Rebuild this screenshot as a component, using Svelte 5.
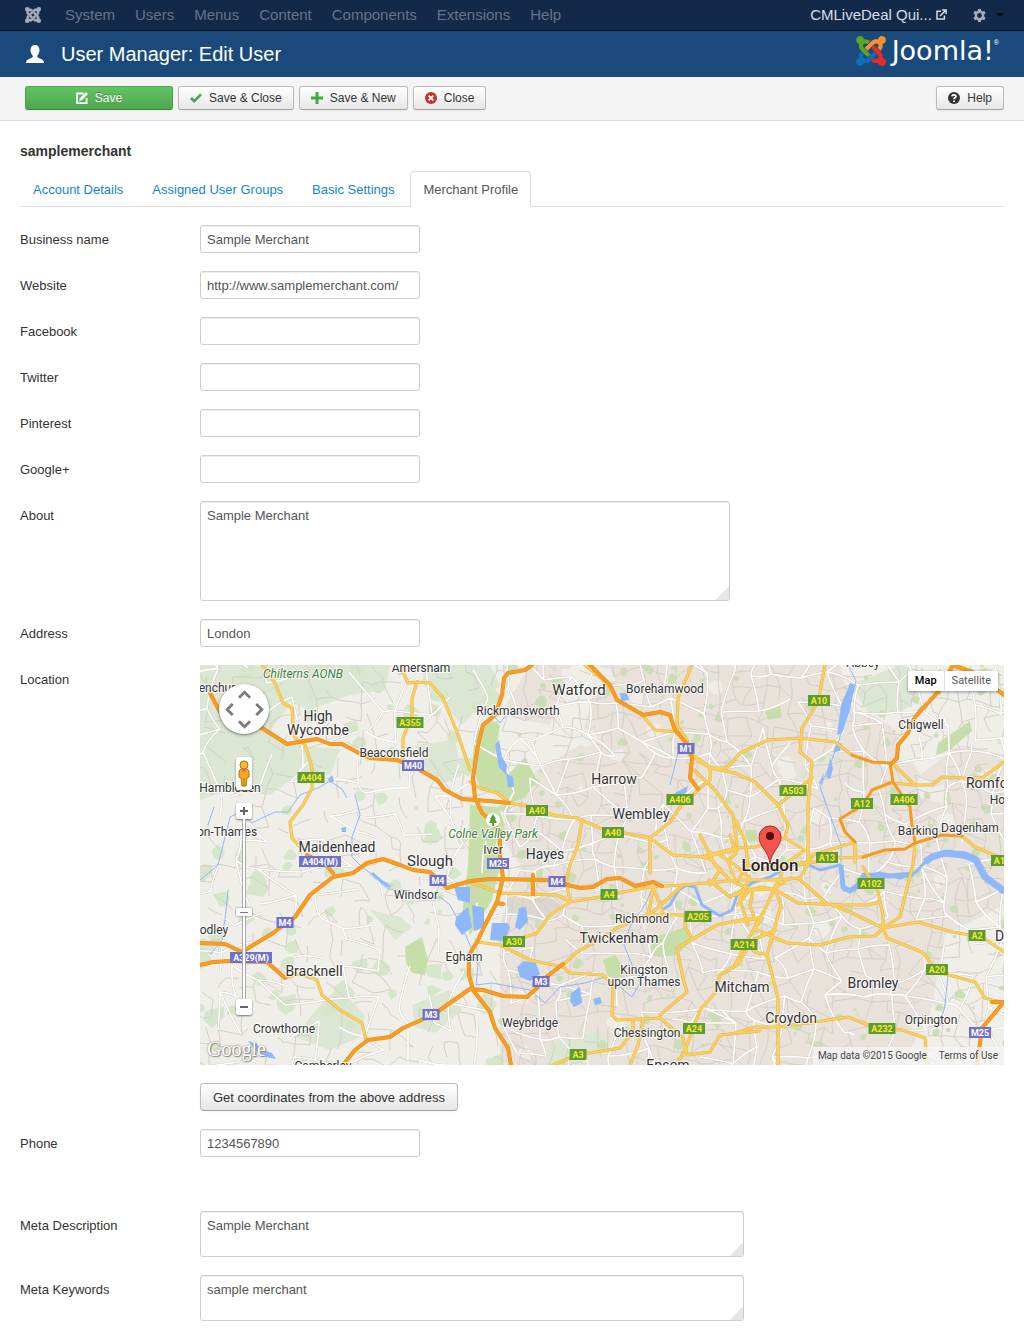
<script>
  const menu = ['System', 'Users', 'Menus', 'Content', 'Components', 'Extensions', 'Help'];
  const tabs = ['Account Details', 'Assigned User Groups', 'Basic Settings', 'Merchant Profile'];
  let active = $state('Merchant Profile');
  let mapType = $state('Map');
  let zoomLevel = $state(48);

  const textFields = [
    { id: 'business', label: 'Business name', value: 'Sample Merchant' },
    { id: 'website', label: 'Website', value: 'http://www.samplemerchant.com/' },
    { id: 'facebook', label: 'Facebook', value: '' },
    { id: 'twitter', label: 'Twitter', value: '' },
    { id: 'pinterest', label: 'Pinterest', value: '' },
    { id: 'google', label: 'Google+', value: '' }
  ];

  // Four interlocking arms of the Joomla mark
  const arms = [
    { c: '#5aa426', d: 'M.6 92.1C.6 58.8 27.4 32 60.4 32c30 0 54.5 21.9 59.2 50.2 32.6-7.6 67.1.6 96.5 30l-44.3 44.3c-20.5-20.5-42.6-16.3-55.4-3.5-14.3 14.3-14.3 37.9 0 52.2l99.5 99.5-44 44.3c-87.7-87.2-49.7-49.7-99.8-99.7-26.8-26.5-35-64.8-24.8-98.9C20.4 144.6.6 120.7.6 92.1z' },
    { c: '#fa8f2b', d: 'M130.1 208.5l44.3 44.3c10-10 89.7-89.7 99.7-99.8 14.3-14.3 37.6-14.3 51.9 0 12.8 12.8 17 35-3.5 55.4l44 44.3c31.2-31.2 38.5-67.6 28.9-101.2 29.2-4.1 51.9-29.2 51.9-59.5 0-33.2-26.8-60.1-59.8-60.1-30.3 0-55.4 22.5-59.5 51.6-33.8-9.9-71.7-1.5-98.3 25.1-18.3 19.1-71.1 71.5-99.6 99.9z' },
    { c: '#ea2a27', d: 'M396.4 360.7c8.2-32.7-.9-68.5-26.3-93.9-11.8-12.2 5 4.7-99.5-99.7l-44.3 44.3 99.7 99.7c14.3 14.3 14.3 37.6 0 51.9-12.8 12.8-35 17-55.4-3.5l-44 44.3c27.6 30.2 68 38.8 102.7 28 5.5 27.4 29.7 48.1 58.9 48.1 33 0 59.8-26.8 59.8-60.1 0-30.2-22.5-55-51.6-59.1z' },
    { c: '#0e6fb5', d: 'M312.1 307.6l-44-44.3c-87 86.4-50.4 50.4-99.7 99.8-14.3 14.3-37.6 14.3-51.9 0-13.1-13.4-16.9-35.3 3.2-55.4l-44-44.3c-30.2 30.2-38 65.2-29.5 98.3-26.7 6-46.2 29.9-46.2 58.2C0 453.2 26.8 480 59.8 480c28.6 0 52.5-19.8 58.6-46.7 32.7 8.2 68.5-.6 94.2-26 32.1-32 12.2-12.4 99.5-99.7z' }
  ];

  // Seeded generator, so that the street pattern is the same on every load
  let seed = 7;
  const rnd = () => {
    seed = (seed * 16807) % 2147483647;
    return seed / 2147483647;
  };

  function network(step, keep, jitter, rural) {
    const cols = Math.ceil(804 / step) + 2;
    const rows = Math.ceil(400 / step) + 2;
    const pts = [];
    for (let r = 0; r < rows; r++) {
      pts.push([]);
      for (let c = 0; c < cols; c++) {
        pts[r].push([
          Math.round((c - 0.5) * step + (rnd() - 0.5) * step * jitter),
          Math.round((r - 0.5) * step + (rnd() - 0.5) * step * jitter)
        ]);
      }
    }
    let d = '';
    const link = (a, b) => {
      const k = a[0] < 300 ? keep * rural : keep;
      if (rnd() > k) return;
      const mx = Math.round((a[0] + b[0]) / 2 + (rnd() - 0.5) * step * 0.3);
      const my = Math.round((a[1] + b[1]) / 2 + (rnd() - 0.5) * step * 0.3);
      d += `M${a[0]} ${a[1]}Q${mx} ${my} ${b[0]} ${b[1]}`;
    };
    for (let r = 0; r < rows - 1; r++) {
      for (let c = 0; c < cols - 1; c++) {
        link(pts[r][c], pts[r][c + 1]);
        link(pts[r][c], pts[r + 1][c]);
        if (rnd() < 0.15) link(pts[r][c], pts[r + 1][c + 1]);
      }
    }
    return d;
  }

  function patches(count, x0, x1, size) {
    let d = '';
    for (let i = 0; i < count; i++) {
      const x = x0 + rnd() * (x1 - x0);
      const y = rnd() * 400;
      const s = size * (0.3 + rnd());
      const n = 7;
      for (let k = 0; k < n; k++) {
        const a = (k / n) * Math.PI * 2;
        const q = s * (0.55 + rnd() * 0.6);
        d += `${k ? 'L' : 'M'}${Math.round(x + Math.cos(a) * q)} ${Math.round(y + Math.sin(a) * q)}`;
      }
      d += 'Z';
    }
    return d;
  }

  const lanes = network(15, 0.6, 0.8, 0.5);
  const streets = network(27, 0.75, 0.8, 0.42);
  const woods = patches(95, 0, 300, 9);
  const parks = patches(220, 290, 804, 5);
  const fields = patches(35, 290, 804, 10);

  const ruralAreas = [
    '0,0 330,0 300,50 350,60 372,0 400,0 380,80 330,110 300,170 320,200 300,260 300,400 0,400',
    '640,0 804,0 804,90 760,80 720,110 690,60 650,40',
    '745,270 804,240 804,400 700,400 730,350'
  ];
  const greenAreas = [
    '0,0 70,0 90,40 70,66 90,80 140,84 130,110 95,112 70,130 30,125 0,135',
    '70,0 190,0 185,25 150,30 110,45 85,35',
    '225,0 290,0 300,20 262,60 245,40 222,18',
    '130,330 145,318 150,335 165,350 160,372 130,385 95,372 110,352',
    '215,80 255,75 262,110 240,120 225,105',
    '170,245 200,252 212,262 195,275 185,262',
    '212,340 250,325 262,345 235,368 215,362',
    '650,20 700,0 735,10 705,45 670,50',
    '350,380 400,365 410,385 370,400 345,400'
  ];
  const brightParks = [
    '275,70 290,55 300,60 295,90 310,108 325,92 337,115 325,132 308,140 298,126 280,122 272,100',
    '270,140 298,142 305,160 295,180 300,200 292,235 280,255 270,270 262,250 268,200',
    '455,272 485,262 492,275 477,290 462,292 448,290',
    '403,295 415,290 425,305 422,318 408,312',
    '205,282 222,272 228,295 225,310 212,308 206,298',
    '738,78 770,56 772,66 750,85 736,90',
    '545,165 556,165 558,176 546,178',
    '565,47 580,40 582,52 568,55'
  ];
  const lakes = [
    '315,262 319,243 326,242 328,256 320,265', '292,258 307,258 310,262 305,276 290,275',
    '317,302 324,296 336,298 340,309 330,316 320,312', '371,328 380,322 382,338 374,342 370,336',
    '393,334 400,332 402,338 395,340', '650,18 655,20 650,45 642,68 637,70 641,40',
    '420,28 427,28 429,35 421,36', '295,80 299,75 302,92 307,100 306,110 299,102',
    '306,108 313,112 314,122 308,122', '254,222 270,222 270,238 258,235',
    '256,252 268,242 272,262 262,270 255,260', '272,240 284,243 284,262 274,266',
    '628,105 630,92 633,104 630,114 626,112', '619,118 624,108 622,120', '636,80 642,78 640,86 633,87',
    '475,128 488,121 486,128 478,132', '128,114 132,110 134,116 130,118', '141,163 146,162 146,167 142,167',
    '48,376 56,378 60,384 72,388 76,394 66,392 56,386'
  ];
  const rivers = [
    ['0,215 18,200 30,152 38,148 52,158 60,154 75,147 88,147 100,130 118,123 130,116 142,124 147,133', 1],
    ['8,160 14,142 M28,225 26,246 22,275 10,290', 1],
    ['155,130 160,150 152,172 152,192 160,200 172,210 188,224 210,226 228,234 240,232 250,240 262,262 270,280 278,300 276,320 292,318 330,325 345,338 360,322 385,318 405,312 420,322 432,332 440,318 432,300 424,280 430,262 446,238 452,224', 1],
    ['172,208 182,217 190,222', 3],
    ['462,245 470,240 478,226 486,220 495,222 502,240 520,251 532,245 538,228 552,218 570,212 592,200 605,198 620,205 640,200 644,225 655,225 662,212 680,208 700,213 715,208 725,197 740,190 758,191 775,195 785,212 804,228', 3],
    ['725,197 732,192 745,188 765,190 776,195 785,212 804,226', 7],
    ['641,200 643,222 650,226 658,220 664,210 690,211 714,209', 5],
    ['648,0 656,16 648,45 639,75 630,100 620,122 630,150 641,180 641,200', 1],
    ['748,310 745,340 740,360 M480,80 470,120 M293,50 300,58 310,45', 1]
  ];
  const yellow = [
    '62,0 75,18 83,38 92,43 93,60 95,73 105,80 112,103 112,123 103,140 90,157 92,173 100,182',
    '200,0 208,18 217,17 212,33 212,50 203,73 203,95', '217,17 230,18 243,33 257,67 270,105',
    '270,117 280,123 297,128 310,138 337,143 353,150 377,153 400,163 450,173 473,190 503,192 537,185',
    '385,0 403,15 415,30', '442,50 455,65 477,67 487,75 490,90 510,103', '492,0 478,33 477,60 487,75',
    '493,90 510,102 510,115 500,123 480,142 470,157 450,173 450,208',
    '510,103 527,103 540,88 568,75 600,73 635,77 652,90', '494,105 515,125 533,150 537,180',
    '382,155 378,180 370,200 366,215 370,237',
    '625,0 618,37 602,63 600,87 612,97 608,140 608,200', '535,108 555,117 578,140 588,160 585,173 608,187',
    '510,103 535,108', '578,140 612,113', '692,98 715,120 732,120 742,112 765,113 782,113 804,97',
    '690,118 715,120', '762,171 775,182 804,194', '502,192 535,183 555,182 585,173',
    '612,190 655,177 655,197', '600,200 635,193 663,192', '715,180 713,200 709,215 700,252 683,263',
    '270,217 300,228 357,230 370,237 400,232 423,227 450,222 483,220 540,215 575,215 600,213 612,192',
    '370,237 350,250 337,268 325,272', '277,277 300,280 330,295 363,302 370,308 403,310 413,320 412,350 417,355 460,353 483,373',
    '363,300 377,287 403,272 417,263 453,247 483,220', '353,400 377,390 420,383 433,367 433,355', '430,400 438,380 443,355',
    '460,350 487,327 483,313 477,283 517,260 540,255 560,253', '453,223 450,240 448,250 485,250 485,262 492,273', '453,223 463,247',
    '483,373 487,390 510,387 520,370 560,366', '477,400 487,380 500,345 515,328 520,310 537,300 553,275 575,265',
    '535,368 555,362 578,362 615,357 648,352 668,360 702,365 725,373 727,400',
    '580,243 567,290 578,333 578,400', '574,224 598,238 640,240 668,240 680,237', '598,213 625,237 652,248 683,263',
    '535,257 562,253 555,264 587,278 620,280 648,272 675,271 683,263 718,257 752,267 782,272 804,287',
    '683,263 687,273 722,287 738,307 775,317 785,333 804,338', '663,202 678,227 683,250 683,263',
    '537,240 550,225 574,224 590,213', '535,230 560,222 575,224 582,243', '540,212 548,200 563,205 580,200 608,197',
    '535,155 545,175 548,200', '520,190 535,200 549,212 540,235 548,260', '574,224 567,240 545,280 535,300',
    '574,224 580,213 584,200 602,187', '510,220 520,205 512,195 503,192', '509,215 530,232 548,222',
    '500,170 515,200 530,215 545,222', '530,170 536,188 528,196 535,215', '555,255 550,240 553,225',
    '85,313 100,309 117,315 122,330 140,345 162,358 166,375', '567,290 555,287 545,278'
  ];
  const motorway = [
    '10,28 20,47 40,54 62,63 87,79 117,74 130,79 142,79 157,87 170,93 197,95 220,105 237,115 245,125 262,134 290,136 309,138',
    '332,0 325,5 308,8 304,13 302,30 295,50 283,60 278,80 273,113 275,133 282,148 290,155 300,167 300,190 303,213 297,237 285,260 277,277 269,290 269,310 273,325 290,347 295,363 308,383 311,400',
    '143,400 155,385 168,375 190,372 203,363 233,350 247,340 270,324 283,325 303,331 327,332 337,323 345,313 363,299',
    '0,300 13,297 30,296 67,297 85,313', '0,278 25,279 42,287 73,268 95,252 110,230 133,212 153,208 167,198 183,194 200,200 213,205 230,207 247,223 270,216 290,214 347,215 380,223 393,222 407,214 420,213 435,221 453,217 462,221',
    '107,190 126,200 133,208', '333,210 333,229', '296,238 303,239',
    '390,0 410,20 417,35 443,50 460,47 470,50 475,65 488,80 492,93 490,113 498,124',
    '753,0 738,27 715,52 708,68 698,80 697,93 692,98', '753,0 775,8 804,30', '804,337 782,363 777,400', '792,337 804,337'
  ];
  const trunk = [
    '652,90 672,97 690,98 693,117 710,142 712,160 715,177', '690,118 672,125 663,140 640,154 645,167 655,177',
    '663,192 685,185 705,184 715,178 742,170 762,171'
  ];
  const pathOf = (s) => s.split(' M').map((p) => 'M' + p.replace('M', '').replace(/ /g, 'L').replace(/,/g, ' ')).join('');

  const places = [
    ['Amersham', 221, 7, 12], ['enchur', 17, 27, 12], ['High', 118, 56, 14], ['Wycombe', 118, 70, 14],
    ['Watford', 379, 30, 15], ['Borehamwood', 465, 28, 12], ['Rickmansworth', 318, 50, 12], ['Beaconsfield', 194, 92, 12],
    ['Hambleden', 30, 127, 12], ['Harrow', 414, 119, 14], ['Wembley', 441, 154, 14], ['on-Thames', 27, 171, 12],
    ['Maidenhead', 137, 187, 14], ['Slough', 230, 201, 15], ['Iver', 293, 189, 12], ['Hayes', 345, 194, 14],
    ['Windsor', 216, 234, 12], ['Richmond', 442, 258, 12], ['Twickenham', 419, 278, 14], ['Chigwell', 721, 64, 12],
    ['Romford', 793, 123, 14], ['Hornchurch', 821, 139, 12], ['Barking', 718, 170, 12], ['Dagenham', 770, 167, 12],
    ['Egham', 264, 296, 12], ['Bracknell', 114, 311, 14], ['odley', 14, 269, 12], ['Crowthorne', 84, 368, 12],
    ['Kingston', 444, 309, 12], ['upon Thames', 444, 321, 12], ['Weybridge', 330, 362, 12], ['Chessington', 447, 372, 12],
    ['Mitcham', 542, 327, 14], ['Bromley', 673, 323, 14], ['Croydon', 591, 358, 14], ['Orpington', 731, 359, 12],
    ['Camberley', 123, 405, 12], ['Epsom', 468, 405, 14], ['Dartford', 821, 276, 14], ['Abbey', 663, 2, 12]
  ];
  const shields = [
    ['A355', 210, 57], ['A404', 111, 112], ['A40', 337, 145], ['A40', 413, 167], ['A406', 480, 134], ['M40', 213, 100],
    ['M1', 486, 83], ['A10', 619, 35], ['A503', 593, 125], ['A12', 662, 138], ['A406', 704, 134], ['A13', 627, 192],
    ['A102', 671, 218], ['A13', 802, 195], ['A404(M)', 120, 196], ['M4', 238, 215], ['M25', 298, 198], ['M4', 357, 216],
    ['A4', 409, 229], ['A205', 498, 251], ['A214', 544, 279], ['A2', 777, 270], ['A20', 737, 304], ['M25', 780, 367],
    ['A232', 682, 363], ['A24', 494, 363], ['A3', 378, 389], ['M3', 341, 316], ['A30', 314, 276], ['M3', 231, 349],
    ['M4', 85, 257], ['A329(M)', 51, 292]
  ].map(([t, x, y]) => ({ t, x, y, w: t.length * 5 + 7, blue: t.includes('M') }));
</script>

<nav class="topbar" aria-label="Main menu">
  <a class="mark" href="#home" aria-label="Home">
    <svg viewBox="0 32 448 448" width="16" height="16">{#each arms as a}<path d={a.d} fill="#a3acb8" stroke="#a3acb8" stroke-width="14" />{/each}</svg>
  </a>
  <ul>
    {#each menu as m}<li><a href="#{m}">{m}</a></li>{/each}
  </ul>
  <a class="site" href="#site">CMLiveDeal Qui...
    <svg width="11" height="11" viewBox="0 0 11 11" fill="none" stroke="#d8dde3" stroke-width="1.5"><path d="M5 2.2H1V10h7.4V6.4M4 7l5-5M6 .9h4.1V5" /></svg>
  </a>
  <button class="gear" aria-label="Settings">
    <svg width="13" height="13" viewBox="0 0 16 16"><path fill="#a3acb8" fill-rule="evenodd" d="M6.3 0h3.4l.5 2.200 1.400.8 2.200-.7 1.700 2.900-1.700 1.500v2.600l1.700 1.500-1.700 2.900-2.200-.7-1.400.8L9.700 16H6.300l-.5-2.200-1.400-.8-2.200.7L.5 10.800l1.700-1.500V6.700L.5 5.200l1.700-2.900 2.200.7 1.400-.8zM8 5a3 3 0 100 6 3 3 0 000-6z" /></svg>
    <span class="caret"></span>
  </button>
</nav>

<header>
  <svg width="20" height="19" viewBox="0 0 20 19"><path fill="#fff" d="M10 0c3 0 4.500 2 4.500 5 0 2.600-1 4.400-2 5.400-.6.8-.3 1.800.5 2.200l4 1.800c1.400.7 1.900 1.800 2 3.600H1c.1-1.800.6-2.900 2-3.600l4-1.800c.8-.4 1.100-1.400.5-2.200-1-1-2-2.800-2-5.400 0-3 1.500-5 4.500-5z" /></svg>
  <h1>User Manager: Edit User</h1>
  <div class="brand">
    <svg viewBox="0 32 448 448" width="30" height="30">{#each arms as a}<path d={a.d} fill={a.c} />{/each}</svg>
    <span>Joomla!</span><sup>®</sup>
  </div>
</header>

<div class="toolbar" role="toolbar">
  <button class="btn save">
    <svg width="12" height="12" viewBox="0 0 12 12"><path fill="none" stroke="#fff" stroke-width="1.800" d="M7.500 1.500H1v9.600h9.600V6" /><path fill="#fff" d="M3.200 9l.6-2.800L10 0l2 2-6.100 6.300z" /></svg>Save
  </button>
  <button class="btn"><svg width="12" height="12" viewBox="0 0 12 12"><path fill="none" stroke="#46a546" stroke-width="2.600" d="M1 6l3.200 3.200L11 2.400" /></svg>Save &amp; Close</button>
  <button class="btn"><svg width="12" height="12" viewBox="0 0 12 12"><path stroke="#46a546" stroke-width="3" d="M6 0v12M0 6h12" /></svg>Save &amp; New</button>
  <button class="btn"><svg width="12" height="12" viewBox="0 0 12 12"><circle cx="6" cy="6" r="6" fill="#bd362f" /><path stroke="#fff" stroke-width="1.800" d="M3.700 3.700l4.600 4.600M8.300 3.700L3.700 8.300" /></svg>Close</button>
  <button class="btn help"><svg width="12" height="12" viewBox="0 0 12 12"><circle cx="6" cy="6" r="6" fill="#333" /><path fill="none" stroke="#fff" stroke-width="1.700" d="M3.900 4.400c.2-2 4.300-1.900 4.100.1C7.900 5.700 6 5.500 6 7.300M6 8.400v1.500" /></svg>Help</button>
</div>

<main>
  <h2>samplemerchant</h2>
  <div class="tabs" role="tablist">
    {#each tabs as t}
      <button role="tab" aria-selected={active === t} class:active={active === t} onclick={() => (active = t)}>{t}</button>
    {/each}
  </div>

  <form>
    {#each textFields as f}
      <div class="row">
        <label for={f.id}>{f.label}</label>
        <input id={f.id} type="text" value={f.value} />
      </div>
    {/each}
    <div class="row">
      <label for="about">About</label>
      <textarea id="about" class="about">Sample Merchant</textarea>
    </div>
    <div class="row">
      <label for="address">Address</label>
      <input id="address" type="text" value="London" />
    </div>
    <div class="row">
      <span class="label">Location</span>
      <div class="location">
        <div class="map">
          <svg class="canvas" viewBox="0 0 804 400" preserveAspectRatio="xMidYMid slice" role="img" aria-label="Map of London">
            <rect width="804" height="400" fill="#e8e2db" />
            {#each ruralAreas as p}<polygon points={p} fill="#f0eee8" />{/each}
            {#each greenAreas as p}<polygon points={p} fill="#dbe7d2" />{/each}
            <path d={woods} fill="#d5e6ca" />
            <path d={fields} fill="#efede7" />
            <path d={parks} fill="#cadfb5" />
            {#each brightParks as p}<polygon points={p} fill="#c5dfa6" />{/each}
            <polygon points="306,233 350,233 363,241 340,258 308,248" fill="#dcd6d1" />
            <path d={lanes} fill="none" stroke="#d6cfc6" stroke-width="1" />
            <path d={streets} fill="none" stroke="#d3cbc2" stroke-width="2.400" />
            <path d={streets} fill="none" stroke="#fff" stroke-width="1.600" />
            {#each lakes as p}<polygon points={p} fill="#8fb8fb" />{/each}
            {#each rivers as [r, w]}<path d={pathOf(r)} fill="none" stroke="#8fb8fb" stroke-width={w} stroke-linejoin="round" />{/each}
            {#each yellow as r}<path d={pathOf(r)} class="road" stroke="#e3b553" stroke-width="3.200" />{/each}
            {#each yellow as r}<path d={pathOf(r)} class="road" stroke="#fbcf58" stroke-width="2.200" />{/each}
            {#each trunk as r}<path d={pathOf(r)} class="road" stroke="#f5991f" stroke-width="3" />{/each}
            {#each motorway as r}<path d={pathOf(r)} class="road" stroke="#e58a1c" stroke-width="4" />{/each}
            {#each motorway as r}<path d={pathOf(r)} class="road" stroke="#f99d20" stroke-width="3" />{/each}
            <circle cx="293" cy="155" r="7" fill="#fff" />
            <path d="M293 149l3 5h-1l2 4h-3v3h-2v-3h-3l2-4h-1z" fill="#5b9b3a" />
            {#each shields as s}
              <rect x={s.x - s.w / 2} y={s.y - 5} width={s.w} height="11" fill={s.blue ? '#6f6fce' : '#5c9c32'} />
              <text class="shield" x={s.x} y={s.y + 4} fill={s.blue ? '#fff' : '#f7e733'}>{s.t}</text>
            {/each}
            <text class="place park" x="103" y="13" font-size="12">Chilterns AONB</text>
            <text class="place park" x="293" y="173" font-size="12">Colne Valley Park</text>
            {#each places as [t, x, y, s]}<text class="place" {x} {y} font-size={s}>{t}</text>{/each}
            <text class="place city" x="570" y="206" font-size="17">London</text>
            <path d="M570 199c-1-13-11-17-11-27a11 11 0 0122 0c0 10-10 14-11 27z" fill="#f3544c" stroke="#a52f2a" stroke-width="1" />
            <circle cx="570" cy="171" r="4" fill="#5a0d0a" />
          </svg>

          <div class="pan">
            <button type="button" class="up" aria-label="Pan up"><svg viewBox="0 0 14 9"><path d="M1 8l6-6 6 6" /></svg></button>
            <button type="button" class="left" aria-label="Pan left"><svg viewBox="0 0 9 14"><path d="M8 1L2 7l6 6" /></svg></button>
            <button type="button" class="right" aria-label="Pan right"><svg viewBox="0 0 9 14"><path d="M1 1l6 6-6 6" /></svg></button>
            <button type="button" class="down" aria-label="Pan down"><svg viewBox="0 0 14 9"><path d="M1 1l6 6 6-6" /></svg></button>
          </div>
          <div class="zoomer">
            <button type="button" class="pegman" aria-label="Street View">
              <svg width="12" height="27" viewBox="0 0 12 27" stroke="#b3730b" stroke-width="1"><path fill="#f6a81c" d="M3 9h6l2 2v6l-2 1-1 8H4l-1-8-2-1v-6z" /><path d="M6 18v8" /><circle cx="6" cy="5" r="4" fill="#f9b934" /><path fill="#ef6a5e" stroke="none" d="M3 9h6l-3 4z" /></svg>
            </button>
            <button type="button" aria-label="Zoom in"><svg width="10" height="10" viewBox="0 0 10 10"><path d="M5 1v8M1 5h8" /></svg></button>
            <input type="range" aria-label="Zoom level" min="0" max="100" bind:value={zoomLevel} />
            <button type="button" aria-label="Zoom out"><svg width="10" height="10" viewBox="0 0 10 10"><path d="M1 5h8" /></svg></button>
          </div>
          <div class="types">
            {#each ['Map', 'Satellite'] as t}
              <button class:on={mapType === t} onclick={() => (mapType = t)} type="button">{t}</button>
            {/each}
          </div>
          <span class="logo">Google</span>
          <div class="credit"><span>Map data ©2015 Google</span><a href="#terms">Terms of Use</a></div>
        </div>
        <button type="button" class="btn large">Get coordinates from the above address</button>
      </div>
    </div>
    <div class="row phone">
      <label for="phone">Phone</label>
      <input id="phone" type="text" value="1234567890" />
    </div>
    <div class="row">
      <label for="metadesc">Meta Description</label>
      <textarea id="metadesc" class="meta">Sample Merchant</textarea>
    </div>
    <div class="row">
      <label for="metakey">Meta Keywords</label>
      <textarea id="metakey" class="meta">sample merchant</textarea>
    </div>
  </form>
</main>

<style>
  :global(body) {
    margin: 0;
    background: #fff;
    color: #333;
    font: 13px/18px "Liberation Sans", Arial, sans-serif;
  }
  button, input, textarea { font: inherit; margin: 0; box-sizing: border-box; }
  button { cursor: pointer; }
  a { text-decoration: none; }
  svg { flex: none; }

  .topbar {
    display: flex;
    align-items: center;
    height: 30px;
    padding: 0 20px 0 25px;
    background: #13294a;
    border-bottom: 1px solid #0b1626;
    font-size: 15px;
  }
  .mark { display: flex; margin-right: 24px; }
  .topbar ul { display: flex; gap: 20px; margin: 0; padding: 0; list-style: none; }
  .topbar li a { color: #66738a; }
  .site { margin-left: auto; color: #d9dfe7; }
  .gear {
    display: flex;
    align-items: center;
    gap: 10px;
    margin-left: 26px;
    padding: 0;
    border: 0;
    background: none;
  }
  .caret { border: 4px solid transparent; border-top-color: #050b14; border-bottom: 0; }

  header {
    display: flex;
    align-items: center;
    height: 46px;
    padding: 0 25px;
    background: #1a4a7c;
    color: #fff;
  }
  h1 { margin: 0 0 0 16px; font-size: 20px; font-weight: 400; line-height: 24px; }
  .brand { display: flex; align-items: center; margin-left: auto; padding-bottom: 6px; }
  .brand span { margin-left: 6px; font: 400 27px/30px "DejaVu Sans", sans-serif; }
  .brand sup { align-self: flex-start; font-size: 7px; line-height: 14px; }

  .toolbar {
    display: flex;
    gap: 5px;
    padding: 9px 20px 10px 25px;
    background: #f4f4f4;
    border-bottom: 1px solid #dedede;
  }
  .btn {
    display: flex;
    align-items: center;
    justify-content: center;
    gap: 7px;
    height: 24px;
    padding: 0 11px;
    border: 1px solid #bbb;
    border-bottom-color: #a2a2a2;
    border-radius: 3px;
    background: linear-gradient(#fff, #e6e6e6);
    box-shadow: 0 1px 2px rgba(0, 0, 0, 0.05);
    color: #333;
    font-size: 12px;
  }
  .save {
    width: 148px;
    border-color: #46a546;
    border-bottom-color: #3a873a;
    background: linear-gradient(#62c462, #4fa64f);
    color: #fff;
    text-shadow: 0 -1px 0 rgba(0, 0, 0, 0.25);
  }
  .help { margin-left: auto; }
  .large { height: 28px; padding: 1px 12px 0; font-size: 13px; border-radius: 4px; }

  main { padding: 21px 20px 15px; }
  h2 { margin: 0 0 11px; font-size: 14px; line-height: 18px; }
  .tabs { display: flex; gap: 3px; border-bottom: 1px solid #ddd; margin-bottom: 18px; }
  .tabs button {
    margin-bottom: -1px;
    padding: 9px 12px 7px;
    border: 1px solid transparent;
    border-radius: 4px 4px 0 0;
    background: none;
    color: #0f87cb;
  }
  .tabs .active { border-color: #ddd; border-bottom-color: #fff; background: #fff; color: #555; }

  form { display: flex; flex-direction: column; gap: 18px; }
  .row { display: grid; grid-template-columns: 180px minmax(0, 1fr); align-items: start; }
  .row label, .label { padding-top: 6px; }
  input[type='text'], textarea {
    padding: 4px 6px;
    border: 1px solid #ccc;
    border-radius: 3px;
    background: #fff;
    box-shadow: inset 0 1px 1px rgba(0, 0, 0, 0.075);
    color: #555;
  }
  input[type='text'] { width: 220px; height: 28px; }
  textarea { display: block; max-width: 100%; padding-top: 5px; }
  textarea::-webkit-resizer { background: linear-gradient(135deg, transparent 55%, #e6e6e6 55%); }
  .about { width: 530px; height: 100px; }
  .meta { width: 544px; height: 46px; }
  .phone { margin-bottom: 36px; }
  .location { display: flex; flex-direction: column; align-items: start; gap: 18px; }

  .map { position: relative; width: 100%; height: 400px; overflow: hidden; font-family: Roboto, sans-serif; }
  .canvas { display: block; width: 100%; height: 100%; }
  .road { fill: none; stroke-linejoin: round; stroke-linecap: round; }
  .place {
    fill: #333;
    stroke: #fff;
    stroke-opacity: 0.8;
    stroke-width: 2px;
    paint-order: stroke;
    text-anchor: middle;
    font-family: Roboto, sans-serif;
  }
  .park { fill: #41803f; font-style: italic; }
  .city { font-weight: 500; fill: #222; }
  .shield { font: 700 9px Roboto, sans-serif; text-anchor: middle; }

  .pan {
    position: absolute;
    left: 19px;
    top: 19px;
    display: grid;
    grid-template: repeat(3, 15px) / repeat(3, 15px);
    place-content: center;
    width: 50px;
    height: 50px;
    border-radius: 50%;
    background: #fff;
    box-shadow: 0 1px 3px rgba(0, 0, 0, 0.5);
  }
  .pan button { display: grid; place-items: center; padding: 0; border: 0; background: none; }
  .pan svg { width: 13px; height: 13px; fill: none; stroke: #7b7b7b; stroke-width: 3px; }
  .up { grid-area: 1 / 2; }
  .left { grid-area: 2 / 1; }
  .right { grid-area: 2 / 3; }
  .down { grid-area: 3 / 2; }

  .zoomer { position: absolute; left: 36px; top: 92px; display: flex; flex-direction: column; align-items: center; }
  .zoomer button {
    display: grid;
    place-items: center;
    width: 16px;
    height: 16px;
    padding: 0;
    border: 0;
    border-radius: 2px;
    background: #fff;
    box-shadow: 0 1px 2px rgba(0, 0, 0, 0.5);
  }
  .zoomer button:not(.pegman) svg { stroke: #666; stroke-width: 2px; }
  .zoomer .pegman { height: 33px; margin-bottom: 13px; }
  .zoomer input {
    appearance: none;
    writing-mode: vertical-lr;
    direction: rtl;
    width: 16px;
    height: 180px;
    background: linear-gradient(90deg, transparent 6px, #aaa 6px 7px, #fff 7px 9px, #aaa 9px 10px, transparent 10px);
  }
  .zoomer input::-webkit-slider-thumb {
    appearance: none;
    width: 16px;
    height: 8px;
    border-radius: 1px;
    background: linear-gradient(#777, #777) center / 8px 1px no-repeat #fff;
    box-shadow: 0 0 2px rgba(0, 0, 0, 0.6);
  }

  .types { position: absolute; right: 6px; top: 6px; display: flex; box-shadow: 0 1px 3px rgba(0, 0, 0, 0.4); }
  .types button {
    height: 20px;
    padding: 0 7px;
    border: 0;
    background: #fff;
    color: #565656;
    font-size: 11px;
  }
  .types button + button { border-left: 1px solid #ddd; }
  .types .on { color: #000; font-weight: 500; }
  .logo {
    position: absolute;
    left: 7px;
    bottom: 4px;
    color: #fff;
    font: 20px/24px "Liberation Serif", serif;
    text-shadow: 0 0 2px #777, 1px 1px 1px #888;
  }
  .credit {
    position: absolute;
    right: 0;
    bottom: 0;
    display: flex;
    gap: 12px;
    padding: 0 6px 0 5px;
    background: rgba(245, 245, 245, 0.8);
    color: #444;
    font-size: 10px;
  }
  .credit a { color: #444; }
</style>
